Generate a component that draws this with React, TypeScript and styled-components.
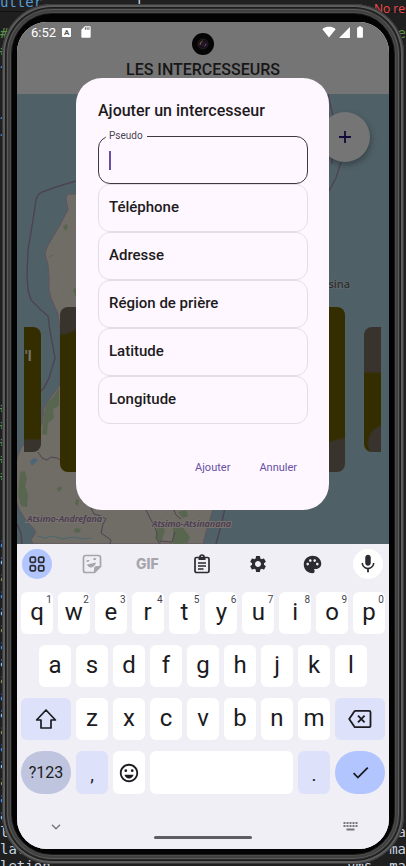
import React from 'react';
import styled, { createGlobalStyle } from 'styled-components';
import {
  MdBatteryFull,
  MdCheck,
  MdMic,
  MdOutlineEmojiEmotions,
  MdPalette,
  MdSdCard,
  MdSettings,
  MdSignalCellular4Bar,
  MdSignalWifi4Bar,
} from 'react-icons/md';

const GlobalStyle = createGlobalStyle`
  *, *::before, *::after { box-sizing: border-box; }
  body { margin: 0; background: #1f1f1f; font-family: Roboto, sans-serif; }
  button, input { font: inherit; }
`;

/* ---------- desktop: editor behind the phone ---------- */

const Desktop = styled.div`
  display: grid;
  grid-template: minmax(100vh, auto) / minmax(0, 1fr);
`;

const Editor = styled.div`
  grid-area: 1 / 1;
  contain: size;
  overflow: hidden;
  background: #1f1f1f;
  font: 14px/17px 'DejaVu Sans Mono', monospace;
`;

const EditorTop = styled.div`
  display: flex;
  align-items: flex-end;
  gap: 84px;
  height: 12px;
  white-space: pre;
  background: #202020;
  border-bottom: 1px solid #111;
`;

const EditorError = styled.span`
  margin-left: auto;
  margin-bottom: -6px;
  width: 32px;
  font: 12px/17px 'Open Sans', sans-serif;
  color: #f14c4c;
`;

const EditorLines = styled.div`
  padding-top: 13px;
`;

const EditorLine = styled.div`
  display: flex;
  justify-content: space-between;
  height: 17px;
  white-space: pre;
`;

const Code = styled.span<{ $tone: string }>`
  color: ${(p) => p.$tone};
`;

/* ---------- phone ---------- */

const Device = styled.div`
  grid-area: 1 / 1;
  display: grid;
  margin: 4px 2px 2px;
  padding: 18px 15px 15px;
  border-radius: 50px;
  background: #030303;
  box-shadow:
    inset 0 0 0 1px #3a3a3a,
    inset 0 0 0 3px #5c5c5c,
    inset 0 0 0 4px #1c1c1c,
    inset 0 0 0 5px #2c2c2c,
    inset 0 0 0 6px #5a5a5a,
    inset 0 0 0 8px #404040,
    inset 0 0 0 9px #4c4c4c,
    inset 0 0 0 10px #191919;
`;

const Screen = styled.main`
  display: grid;
  grid-template-rows: 1fr auto;
  border-radius: 30px;
  overflow: hidden;
  background: #f0eff6;
`;

const Stage = styled.div`
  display: grid;
  grid-template-columns: minmax(0, 1fr);
`;

const AppLayer = styled.div`
  grid-area: 1 / 1;
  display: flex;
  flex-direction: column;
`;

const TopArea = styled.header`
  display: flex;
  flex-direction: column;
  height: 72px;
  background: #757575;
`;

const StatusBar = styled.div`
  display: grid;
  grid-template-columns: 1fr auto 1fr;
  align-items: center;
  height: 36px;
  color: #fff;
`;

const StatusGroup = styled.div<{ $end?: boolean }>`
  display: flex;
  align-items: center;
  align-self: start;
  height: 20px;
  gap: ${(p) => (p.$end ? 2 : 6)}px;
  padding: ${(p) => (p.$end ? '0 22px 0 0' : '0 0 0 14px')};
  justify-content: ${(p) => (p.$end ? 'flex-end' : 'flex-start')};
  font-size: 13px;
`;

const LetterBadge = styled.span`
  width: 9px;
  height: 9px;
  margin-right: 2px;
  border-radius: 1px;
  background: #fff;
  color: #555;
  font: 700 8px/9px Roboto, sans-serif;
  text-align: center;
`;

const Camera = styled.svg`
  display: block;
  width: 22px;
  height: 22px;
  align-self: end;
  margin-bottom: 3px;
`;

const AppTitle = styled.h1`
  margin: 0;
  font-size: 16px;
  font-weight: 500;
  line-height: 23px;
  text-align: center;
  color: #171717;
`;

const MapArea = styled.div`
  flex: 1;
  display: grid;
  grid-template-columns: minmax(0, 1fr);
  overflow: hidden;
  background: #4f6067;
`;

const MapDrawing = styled.svg`
  grid-area: 1 / 1;
  width: 100%;
  height: 100%;
  contain: size;
`;

const AddButton = styled.button`
  grid-area: 1 / 1;
  justify-self: end;
  display: grid;
  place-items: center;
  width: 50px;
  height: 50px;
  margin: 18px 19px 0 0;
  padding: 0;
  border: 0;
  border-radius: 50%;
  background: #757575;
  box-shadow: 1px 3px 6px rgba(0, 0, 0, 0.3);
  color: #120a3a;
`;

const Carousel = styled.div`
  grid-area: 1 / 1;
  align-self: start;
  display: grid;
  grid-template-columns: 17px 1fr 17px;
  align-items: center;
  gap: 19px;
  margin: 213px 8px 0 7px;
`;

const SideCard = styled.div<{ $side: 'left' | 'right' }>`
  height: 125px;
  padding: 21px 1px;
  overflow: hidden;
  font-size: 15px;
  font-weight: 700;
  line-height: 17px;
  color: #75736b;
  border-radius: ${(p) => (p.$side === 'left' ? '0 8px 8px 0' : '8px 0 0 8px')};
  background: ${(p) =>
    p.$side === 'left'
      ? 'linear-gradient(#342d00 111px, #38342d 114px)'
      : 'radial-gradient(circle at 22px 116px, #38342d 17px, transparent 19px), linear-gradient(#38342d 44px, #342d00 47px)'};
`;

const MainCard = styled.div`
  height: 165px;
  border-radius: 8px;
  background:
    radial-gradient(circle at 0 0, #38342d 26px, transparent 29px),
    radial-gradient(circle at 100% 100%, #38342d 32px, transparent 35px),
    #342d00;
`;

/* ---------- dialog ---------- */

const DialogLayer = styled.div`
  grid-area: 1 / 1;
  z-index: 1;
  display: grid;
  padding: 56px 60px 34px 59px;
`;

const Dialog = styled.form`
  display: flex;
  flex-direction: column;
  padding: 21px 21px 28px 22px;
  border-radius: 26px;
  background: #fef7ff;
`;

const DialogTitle = styled.h2`
  margin: 0 0 13px;
  font-size: 16px;
  font-weight: 500;
  line-height: 24px;
  color: #1d1b20;
`;

const Fields = styled.div`
  display: grid;
`;

const FieldBox = styled.label`
  position: relative;
  display: grid;
  align-items: center;
  height: 48px;
`;

const FieldInput = styled.input<{ $active?: boolean }>`
  grid-area: 1 / 1;
  width: 100%;
  height: 48px;
  padding: 0 10px;
  border: 1px solid ${(p) => (p.$active ? '#3c3940' : '#e2dfe3')};
  border-radius: 12px;
  background: transparent;
  font-size: 15px;
  color: #1d1b20;
  outline: 0;
`;

const FieldText = styled.span`
  grid-area: 1 / 1;
  padding: 0 0 2px 11px;
  font-size: 15px;
  font-weight: 500;
  line-height: 20px;
  color: #1d1b20;
  pointer-events: none;
`;

const FloatingText = styled.span`
  position: absolute;
  top: -6px;
  left: 8px;
  padding: 0 4px 0 3px;
  background: #fef7ff;
  font-size: 10px;
  line-height: 12px;
  color: #49454f;
`;

const Caret = styled.span`
  grid-area: 1 / 1;
  width: 2px;
  height: 19px;
  margin-left: 11px;
  background: #6750a4;
`;

const Actions = styled.div`
  display: flex;
  justify-content: flex-end;
  gap: 7px;
  margin-top: auto;
`;

const TextButton = styled.button`
  height: 30px;
  padding: 0 11px;
  border: 0;
  background: transparent;
  font-size: 11px;
  font-weight: 400;
  color: #6750a4;
`;

/* ---------- keyboard ---------- */

const Keyboard = styled.section`
  padding: 5px 4px 0;
  background: #f0eff6;
  color: #1b1b21;
`;

const Tools = styled.div`
  display: flex;
  justify-content: space-between;
  margin: 0 2px 13px 1px;
`;

const Tool = styled.button<{ $fill?: string; $muted?: boolean }>`
  display: grid;
  place-items: center;
  width: 30px;
  height: 30px;
  padding: 0;
  border: 0;
  border-radius: 50%;
  background: ${(p) => p.$fill ?? 'transparent'};
  color: ${(p) => (p.$muted ? '#a6a5ab' : '#2b2b31')};
  font: 800 14px/20px Inter, sans-serif;
`;

const KeyRows = styled.div`
  display: grid;
  gap: 11px;
`;

const KeyRow = styled.div<{ $columns: string; $inset?: boolean; $tall?: boolean }>`
  display: grid;
  grid-template-columns: ${(p) => p.$columns};
  grid-auto-rows: ${(p) => (p.$tall ? 43 : 42)}px;
  gap: 5px;
  padding: 0 ${(p) => (p.$inset ? 18 : 0)}px;
`;

type KeyKind = 'letter' | 'function' | 'mode' | 'enter';
const keyFill: Record<KeyKind, string> = {
  letter: '#ffffff',
  function: '#dde1f9',
  mode: '#bfc5de',
  enter: '#b2c5ff',
};

const Key = styled.button<{ $kind?: KeyKind }>`
  position: relative;
  display: grid;
  place-items: center;
  min-width: 0;
  padding: 0;
  border: 0;
  border-radius: ${(p) => (p.$kind === 'mode' || p.$kind === 'enter' ? 22 : 6)}px;
  background: ${(p) => keyFill[p.$kind ?? 'letter']};
  color: #1b1b21;
  font-size: ${(p) => (p.$kind === 'mode' ? 16 : 24)}px;
  line-height: 28px;
`;

const Letter = styled.span`
  padding-bottom: 3px;
`;

const Hint = styled.sup`
  position: absolute;
  top: 2px;
  right: 1px;
  font-size: 10px;
  line-height: 12px;
  color: #45454c;
`;

const Punctuation = styled.span`
  padding-top: 5px;
  font-size: 19px;
  line-height: 28px;
`;

const NavBar = styled.div`
  display: grid;
  grid-template-columns: 1fr 98px 1fr;
  height: 55px;
  padding: 0 27px;
`;

const NavButton = styled.button<{ $end?: boolean }>`
  display: grid;
  place-items: center;
  justify-self: ${(p) => (p.$end ? 'end' : 'start')};
  align-self: center;
  width: 16px;
  height: 16px;
  margin-top: 10px;
  padding: 0;
  border: 0;
  background: transparent;
  color: #77767c;
`;

const HomePill = styled.div`
  align-self: end;
  height: 3px;
  margin-bottom: 10px;
  border-radius: 2px;
  background: #5e5d62;
`;

/* ---------- icons ---------- */

const GridIcon = () => (
  <svg width="16" height="16" viewBox="0 0 16 16" fill="none" stroke="currentColor" strokeWidth="1.7">
    {[1.2, 9.6].map((x) =>
      [1.2, 9.6].map((y) => <rect key={`${x}${y}`} x={x} y={y} width="5.2" height="5.2" rx="1.4" />),
    )}
  </svg>
);

const StickerIcon = () => (
  <svg width="20" height="20" viewBox="0 0 20 20" fill="none" stroke="currentColor" strokeWidth="1.7">
    <path d="M3.5 1.5h13a2 2 0 0 1 2 2v9l-6 6h-9a2 2 0 0 1-2-2v-13a2 2 0 0 1 2-2Z" />
    <path d="M18.5 12.5h-4a2 2 0 0 0-2 2v4Z" fill="currentColor" strokeWidth="1" />
    <path d="M5 10.5c1.500 4.500 7.500 4 9-2Z" fill="currentColor" stroke="none" />
    <path d="M4.8 7.700c.5-1 1.500-1.200 2.400-.7M11.500 5.800c.7-1 1.700-1.100 2.600-.6" />
  </svg>
);

const ClipboardIcon = () => (
  <svg width="18" height="20" viewBox="0 0 18 20" fill="none" stroke="currentColor" strokeWidth="1.7">
    <rect x="2" y="3.5" width="14" height="15" rx="1.5" />
    <path d="M5.5 3h7v3h-7Z" fill="currentColor" stroke="none" />
    <path d="M7 3a2 2 0 0 1 4 0" />
    <path d="M5 9h8M5 12h8M5 15h5.5" strokeWidth="1.5" />
  </svg>
);

const ShiftIcon = () => (
  <svg width="22" height="22" viewBox="0 0 22 22" fill="none" stroke="currentColor" strokeWidth="1.7" strokeLinejoin="round">
    <path d="M11 2 1.6 12H6v8h10v-8h4.400Z" />
  </svg>
);

const BackspaceIcon = () => (
  <svg width="24" height="20" viewBox="0 0 24 20" fill="none" stroke="currentColor" strokeWidth="1.8" strokeLinejoin="round">
    <path d="M7.5 1.8H21a1.5 1.5 0 0 1 1.5 1.5v13.400a1.500 1.500 0 0 1-1.500 1.500H7.500a1.500 1.500 0 0 1-1.200-.6L1.200 10l5.100-7.600a1.500 1.500 0 0 1 1.200-.6Z" />
    <path d="m10 6.700 6.600 6.600M16.600 6.700 10 13.300" />
  </svg>
);

const ChevronIcon = () => (
  <svg width="10" height="6" viewBox="0 0 10 6" fill="none" stroke="currentColor" strokeWidth="1.4">
    <path d="m1 .8 4 4 4-4" />
  </svg>
);

const KeyboardIcon = () => (
  <svg width="15" height="9" viewBox="0 0 15 9" fill="currentColor">
    {[0, 3, 6, 9, 12].map((x) => (
      <React.Fragment key={x}>
        <rect x={x + 0.5} y="0" width="2" height="2" />
        <rect x={x + 0.5} y="3" width="2" height="2" />
      </React.Fragment>
    ))}
    <rect x="3.5" y="6.5" width="8" height="2" />
  </svg>
);

const PlusIcon = () => (
  <svg width="14" height="14" viewBox="0 0 14 14" stroke="currentColor" strokeWidth="1.8">
    <path d="M7 1v12M1 7h12" />
  </svg>
);

const CameraLens = () => (
  <Camera viewBox="0 0 22 22">
    <circle cx="11" cy="11" r="11" fill="#050505" />
    <circle cx="11" cy="11" r="5" fill="#17101a" stroke="#221f20" />
    <circle cx="11" cy="11" r="2.5" fill="#20162a" />
    <path d="M8 12a4 4 0 0 1 2.500-4" stroke="#8a6a2c" fill="none" />
    <path d="M12 13.500a3 3 0 0 0 2-3" stroke="#7a3f7e" fill="none" />
  </Camera>
);

const MapArtwork = () => (
  <MapDrawing viewBox="17 94 372 450" preserveAspectRatio="xMinYMin slice" aria-hidden="true">
    <path
      fill="#706d67"
      stroke="#5f5460"
      d="M220 194H68l-2 4 2 12-4 7-4 8-6 10-7 12-2 7 3 11 1 12v13l2 8 7 16 2 16v55l-7 9-5 7-4 7-2 15-4 10-8 8-8 5-4 9-2 8v37l3 9 6 10 8 9 3 4-5 8 2 4h170l3-12 5-16 4-14Z"
    />
    <g fill="#586650">
      <path d="m59 388-6 9-6 6-3 11-2 20 5 1 1-12 6-5-1-9 6-3Z" />
      <path d="m20 472 5-1 2 8-2 7 3 8-1 13-6-1-3-11Z" />
      <path d="m63 226 4-2 1 4-3 3ZM73 290l3-3v10ZM57 488l4-2 1 3-4 3ZM76 499l3 1-1 6-3-2Z" />
      <path d="m157 528 6-3 2 6-4 12-4-3ZM173 527l10 1 7 9-3 7h-14ZM178 512l8-2 2 6-5 2Z" />
      <path d="m75 528 6 1-2 4-5-1Z" />
    </g>
    <path d="m30 461 4-3 4 2-3 3-3 3Z" fill="#4a6678" />
    <g fill="none" stroke="#4c6670" strokeWidth="1">
      <path d="m49 257 4-2M37 536l8 2 8-2 9 3 12-2 8 2 10-1" />
    </g>
    <g fill="none" stroke="#4d4352" strokeWidth="1.4">
      <path d="m76 181-20 6-14 5-4 3-2 5-3 20-5 30-1 25 1 15 3 10 10 10 7 6 2 15 5 27-6 20-5 10-3 3-7 18-10 24M17 524l4 9 1 11" />
      <path d="m328 94 5 22-1 48M341 162l-5 16-7 13" />
      <path d="m38 452 4 6 5 2 4-3 6 1 3 2 8-4 8 3" strokeWidth="1" />
      <path d="m91 508 3 6 7 2 5 3-3 5-2 9 10 7-1 4M145 508l5 10 5 9 2 7-1 4 4 6M173 508l3 7 5 4M160 541l12 1 3-10" strokeWidth="1" />
      <path d="m225 508-4 18-5 18" />
    </g>
    <g fontFamily="'Noto Sans', sans-serif" stroke="#77736e" strokeWidth="2" paintOrder="stroke">
      <g fontSize="9" fontStyle="italic" fontWeight="600" fill="#4b3a50">
        <text x="27" y="522">Atsimo-Andrefana</text>
        <text x="152" y="527">Atsimo-Atsinanana</text>
      </g>
      <text x="350" y="288" fontSize="11" textAnchor="end" fill="#2e2e2e" stroke="#5b666a" fontWeight="500">
        Toamasina
      </text>
    </g>
  </MapDrawing>
);

/* ---------- data ---------- */

const green = '#5d8f46';
const blue = '#569cd6';
const pale = '#c8d4e0';
const orange = '#c9924a';

type Fragment = [text: string, tone: string];
const rowLeft = (i: number): Fragment => {
  if (i < 2) return ['#', green];
  if (i === 5 || i === 6 || i === 2) return ['~', blue];
  if (i >= 22 && i < 27) return ['#', green];
  if (i === 48) return ['lat', pale];
  if (i === 47) return ['l', pale];
  if (i === 49) return ['letion', pale];
  if (i >= 30) return ['a', [blue, pale, orange][i % 3]];
  return ['', pale];
};
const rowRight = (i: number): Fragment => {
  if (i === 0) return ['e', green];
  if (i === 47) return ['a', pale];
  if (i === 48) return ['ma', pale];
  if (i === 49) return ['yms, ma', pale];
  return ['', pale];
};

const fields = ['Téléphone', 'Adresse', 'Région de prière', 'Latitude', 'Longitude'];

export default function App() {
  return (
    <>
      <GlobalStyle />
      <Desktop>
        <Editor aria-hidden="true">
          <EditorTop>
            <Code $tone={blue}>utter.</Code>
            <Code $tone={pale}>)</Code>
            <EditorError>No res</EditorError>
          </EditorTop>
          <EditorLines>
            {Array.from({ length: 50 }, (_, i) => {
              const [left, leftTone] = rowLeft(i);
              const [right, rightTone] = rowRight(i);
              return (
                <EditorLine key={i}>
                  <Code $tone={leftTone}>{left}</Code>
                  <Code $tone={rightTone}>{right}</Code>
                </EditorLine>
              );
            })}
          </EditorLines>
        </Editor>

        <Device>
          <Screen>
            <Stage>
              <AppLayer>
                <TopArea>
                  <StatusBar>
                    <StatusGroup>
                      <span>6:52</span>
                      <LetterBadge>A</LetterBadge>
                      <MdSdCard size={14} />
                    </StatusGroup>
                    <CameraLens />
                    <StatusGroup $end>
                      <MdSignalWifi4Bar size={14} />
                      <MdSignalCellular4Bar size={13} />
                      <MdBatteryFull size={14} />
                    </StatusGroup>
                  </StatusBar>
                  <AppTitle>LES INTERCESSEURS</AppTitle>
                </TopArea>
                <MapArea>
                  <MapArtwork />
                  <Carousel>
                    <SideCard $side="left">'I</SideCard>
                    <MainCard />
                    <SideCard $side="right" />
                  </Carousel>
                  <AddButton type="button" aria-label="Ajouter un intercesseur">
                    <PlusIcon />
                  </AddButton>
                </MapArea>
              </AppLayer>

              <DialogLayer>
                <Dialog role="dialog" aria-labelledby="dialog-title" onSubmit={(e) => e.preventDefault()}>
                  <DialogTitle id="dialog-title">Ajouter un intercesseur</DialogTitle>
                  <Fields>
                    <FieldBox>
                      <FieldInput type="text" name="pseudo" $active />
                      <FloatingText>Pseudo</FloatingText>
                      <Caret />
                    </FieldBox>
                    {fields.map((label) => (
                      <FieldBox key={label}>
                        <FieldInput type="text" name={label} />
                        <FieldText>{label}</FieldText>
                      </FieldBox>
                    ))}
                  </Fields>
                  <Actions>
                    <TextButton type="submit">Ajouter</TextButton>
                    <TextButton type="button">Annuler</TextButton>
                  </Actions>
                </Dialog>
              </DialogLayer>
            </Stage>

            <Keyboard aria-label="Clavier">
              <Tools>
                <Tool type="button" aria-label="Menu" $fill="#b2c5ff"><GridIcon /></Tool>
                <Tool type="button" aria-label="Autocollants" $muted><StickerIcon /></Tool>
                <Tool type="button" $muted>GIF</Tool>
                <Tool type="button" aria-label="Presse-papiers"><ClipboardIcon /></Tool>
                <Tool type="button" aria-label="Paramètres"><MdSettings size={20} /></Tool>
                <Tool type="button" aria-label="Thèmes"><MdPalette size={21} /></Tool>
                <Tool type="button" aria-label="Micro" $fill="#ffffff"><MdMic size={22} /></Tool>
              </Tools>
              <KeyRows>
                <KeyRow $columns="repeat(10, 1fr)">
                  {[...'qwertyuiop'].map((k, i) => (
                    <Key type="button" key={k}>
                      <Letter>{k}</Letter>
                      <Hint>{(i + 1) % 10}</Hint>
                    </Key>
                  ))}
                </KeyRow>
                <KeyRow $columns="repeat(9, 1fr)" $inset>
                  {[...'asdfghjkl'].map((k) => (
                    <Key type="button" key={k}><Letter>{k}</Letter></Key>
                  ))}
                </KeyRow>
                <KeyRow $columns="50px repeat(7, 1fr) 50px">
                  <Key type="button" $kind="function" aria-label="Majuscule"><ShiftIcon /></Key>
                  {[...'zxcvbnm'].map((k) => (
                    <Key type="button" key={k}><Letter>{k}</Letter></Key>
                  ))}
                  <Key type="button" $kind="function" aria-label="Effacer"><BackspaceIcon /></Key>
                </KeyRow>
                <KeyRow $columns="50px 32px 32px 1fr 32px 50px" $tall>
                  <Key type="button" $kind="mode">?123</Key>
                  <Key type="button" $kind="function"><Punctuation>,</Punctuation></Key>
                  <Key type="button" aria-label="Emoji"><MdOutlineEmojiEmotions size={22} /></Key>
                  <Key type="button" aria-label="Espace" />
                  <Key type="button" $kind="function"><Punctuation>.</Punctuation></Key>
                  <Key type="button" $kind="enter" aria-label="Valider"><MdCheck size={21} /></Key>
                </KeyRow>
              </KeyRows>
              <NavBar>
                <NavButton type="button" aria-label="Fermer le clavier"><ChevronIcon /></NavButton>
                <HomePill />
                <NavButton type="button" aria-label="Changer de clavier" $end><KeyboardIcon /></NavButton>
              </NavBar>
            </Keyboard>
          </Screen>
        </Device>
      </Desktop>
    </>
  );
}
